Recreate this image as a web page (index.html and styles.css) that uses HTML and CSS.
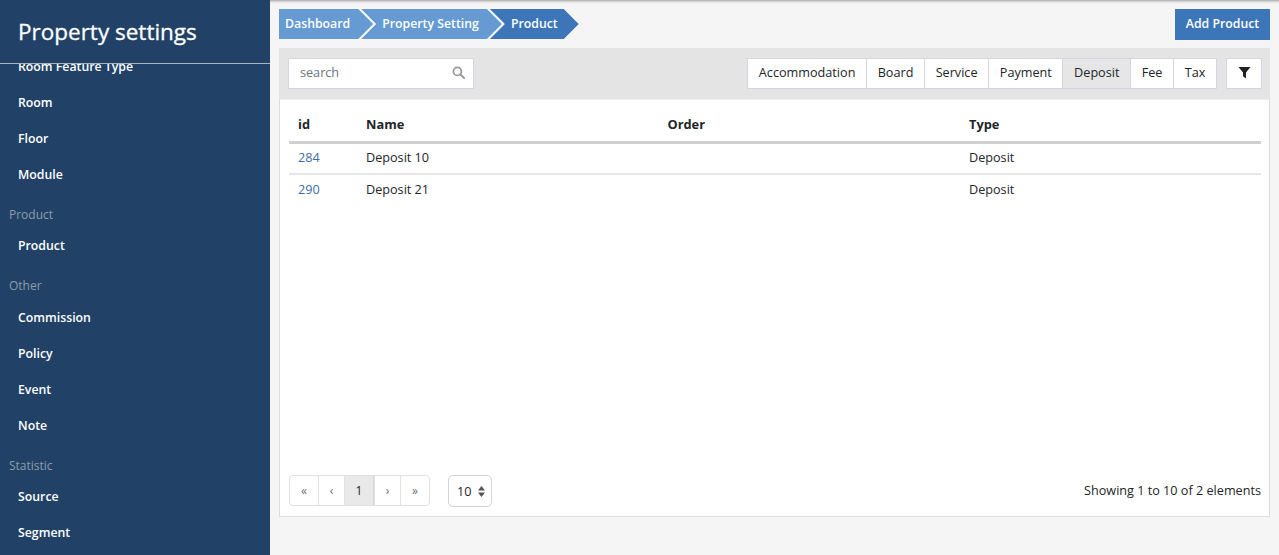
FILE: index.html
```html
<!DOCTYPE html>
<html lang="en">
<head>
<meta charset="utf-8">
<title>Property settings</title>
<link rel="stylesheet" href="styles.css">
</head>
<body>
<div class="app">
  <aside class="sidebar">
    <div class="side-title">Property settings</div>
    <nav class="side-nav">
      <div class="side-inner">
        <a class="side-link">Room Feature Type</a>
        <a class="side-link">Room</a>
        <a class="side-link">Floor</a>
        <a class="side-link">Module</a>
        <div class="side-group">Product</div>
        <a class="side-link">Product</a>
        <div class="side-group">Other</div>
        <a class="side-link">Commission</a>
        <a class="side-link">Policy</a>
        <a class="side-link">Event</a>
        <a class="side-link">Note</a>
        <div class="side-group">Statistic</div>
        <a class="side-link">Source</a>
        <a class="side-link">Segment</a>
      </div>
    </nav>
  </aside>
  <main class="main">
    <div class="topbar">
      <div class="crumbs">
        <a class="crumb crumb-first">Dashboard</a>
        <a class="crumb">Property Setting</a>
        <a class="crumb crumb-active">Product</a>
      </div>
      <button class="btn-add">Add Product</button>
    </div>
    <section class="panel">
      <div class="toolbar">
        <div class="search">
          <span class="search-text">search</span>
          <svg class="search-icon" viewBox="0 0 14 14" width="13" height="13"><circle cx="5.8" cy="5.8" r="4.3" fill="none" stroke="#999" stroke-width="1.9"/><path d="M9 9l4 4" stroke="#999" stroke-width="2.2" stroke-linecap="round"/></svg>
        </div>
        <div class="filters">
          <div class="tabs">
            <a class="tab">Accommodation</a><a class="tab">Board</a><a class="tab">Service</a><a class="tab">Payment</a><a class="tab tab-on">Deposit</a><a class="tab">Fee</a><a class="tab">Tax</a>
          </div>
          <button class="btn-filter"><svg viewBox="0 0 14 14" width="13" height="13"><path d="M0.5 1h13L8.6 7v6.5L5.4 11V7z" fill="#222"/></svg></button>
        </div>
      </div>
      <div class="content">
        <table class="grid">
          <thead><tr><th class="c-id">id</th><th class="c-name">Name</th><th class="c-order">Order</th><th>Type</th></tr></thead>
          <tbody>
            <tr><td><a class="id-link">284</a></td><td>Deposit 10</td><td></td><td>Deposit</td></tr>
            <tr><td><a class="id-link">290</a></td><td>Deposit 21</td><td></td><td>Deposit</td></tr>
          </tbody>
        </table>
        <div class="foot">
          <div class="foot-left">
            <div class="pager">
              <a class="pg pg-first">«</a><a class="pg pg-b">‹</a><a class="pg pg-on">1</a><a class="pg pg-b">›</a><a class="pg pg-last">»</a>
            </div>
            <div class="size">
              <span>10</span>
              <svg viewBox="0 0 7 11" width="7" height="11"><path d="M3.5 0L7 4.4H0zM3.5 11L0 6.6h7z" fill="#555"/></svg>
            </div>
          </div>
          <div class="foot-info">Showing 1 to 10 of 2 elements</div>
        </div>
      </div>
    </section>
  </main>
</div>
</body>
</html>
```
FILE: styles.css
```css
* { box-sizing: border-box; }
html, body { margin: 0; height: 100%; overflow: hidden; }
body { font-family: "Open Sans", sans-serif; font-size: 12.65px; color: #212529; background: #f5f5f5; }
.app { display: flex; height: 555px; }

.sidebar { width: 270px; flex: none; background: #214266; display: flex; flex-direction: column; color: #fff; }
.side-title { height: 64px; flex: none; padding: 14px 0 0 18px; font-size: 22.5px; line-height: 36px; font-weight: 400; border-bottom: 1px solid #a9b4c1; -webkit-text-stroke: 0.3px #fff; }
.side-nav { flex: 1; overflow: hidden; }
.side-inner { margin-top: -15px; }
.side-link { display: block; height: 36px; line-height: 36px; padding-left: 18px; font-size: 12.3px; font-weight: 600; color: #fff; }
.side-group { height: 35.4px; padding: 13px 0 0 9px; line-height: 18px; font-size: 12px; color: #8f9cab; }

.main { flex: 1; min-width: 0; padding: 9px 9px 0; box-shadow: inset 0 4px 3px -3px #9a9a9a; }
.topbar { display: flex; justify-content: space-between; height: 39px; align-items: flex-start; }
.crumbs { display: flex; }
.crumb { height: 30px; line-height: 29px; padding: 0 23px 0 21px; margin-right: -12px; font-size: 12.3px; font-weight: 600; color: #fff; background: #659ad2; clip-path: polygon(0 0, calc(100% - 15px) 0, 100% 50%, calc(100% - 15px) 100%, 0 100%, 15px 50%); }
.crumb-first { padding-left: 6px; clip-path: polygon(0 0, calc(100% - 15px) 0, 100% 50%, calc(100% - 15px) 100%, 0 100%); }
.crumb-active { background: #3c76b8; padding-right: 21px; }
.btn-add { width: 95px; height: 31px; border: 0; padding: 0 0 3px; background: #3c76b8; color: #fff; font: 600 12.3px "Open Sans", sans-serif; }

.panel { height: 469px; display: flex; flex-direction: column; background: #e4e4e4; }
.toolbar { height: 51px; flex: none; padding: 10px 8px 0 9px; display: flex; justify-content: space-between; align-items: flex-start; }
.search { width: 186px; height: 31px; background: #fff; border: 1px solid #d2d6de; display: flex; align-items: center; justify-content: space-between; padding: 0 8px 3px 11px; }
.search-text { color: #6c757d; }
.filters { display: flex; gap: 9px; }
.tabs { display: flex; height: 31px; border: 1px solid #d2d6de; background: #fff; }
.tab { line-height: 27px; padding: 0 10.65px; border-left: 1px solid #d2d6de; }
.tab:first-child { border-left: 0; }
.tab-on { background: #e6e6e6; }
.btn-filter { width: 36px; height: 31px; padding: 0 0 3px; background: #fff; border: 1px solid #d2d6de; display: flex; align-items: center; justify-content: center; }

.content { flex: 1; min-height: 0; background: #fff; border: 1px solid #dcdcdc; border-top-color: #ececec; padding: 0 8px 0 9px; display: flex; flex-direction: column; justify-content: space-between; }
.grid { width: 100%; border-collapse: collapse; table-layout: fixed; }
.grid th { text-align: left; height: 42px; padding: 7px 9px 0; font-size: 12.8px; font-weight: 700; border-bottom: 3px solid #cfcfcf; }
.grid td { height: 32px; padding: 0 9px 2px; border-bottom: 2px solid #e6e6e6; }
.grid tbody tr:last-child td { border-bottom-color: transparent; }
.c-id { width: 68px; }
.c-name, .c-order { width: 301.5px; }
.id-link { color: #3c6ca8; }

.foot { display: flex; justify-content: space-between; align-items: center; padding-bottom: 9px; }
.foot-left { display: flex; align-items: flex-start; gap: 18px; }
.pager { display: flex; height: 31px; border: 1px solid #dee2e6; border-radius: 4px; overflow: hidden; font-size: 12px; }
.pg { height: 29px; line-height: 29px; text-align: center; color: #666e78; border-left: 1px solid #dee2e6; }
.pg:first-child { border-left: 0; }
.pg-first { width: 28px; }
.pg-last { width: 29px; }
.pg-b { width: 26px; }
.pg-on { width: 30px; background: #e9e9e9; color: #212529; border-right: 1px solid #d5d5d5; }
.size { width: 44px; height: 32px; border: 1px solid #ced4da; border-radius: 5px; display: flex; align-items: center; justify-content: space-between; padding: 0 6px 0 8px; }
.foot-info { color: #212529; padding-bottom: 2px; }
```
